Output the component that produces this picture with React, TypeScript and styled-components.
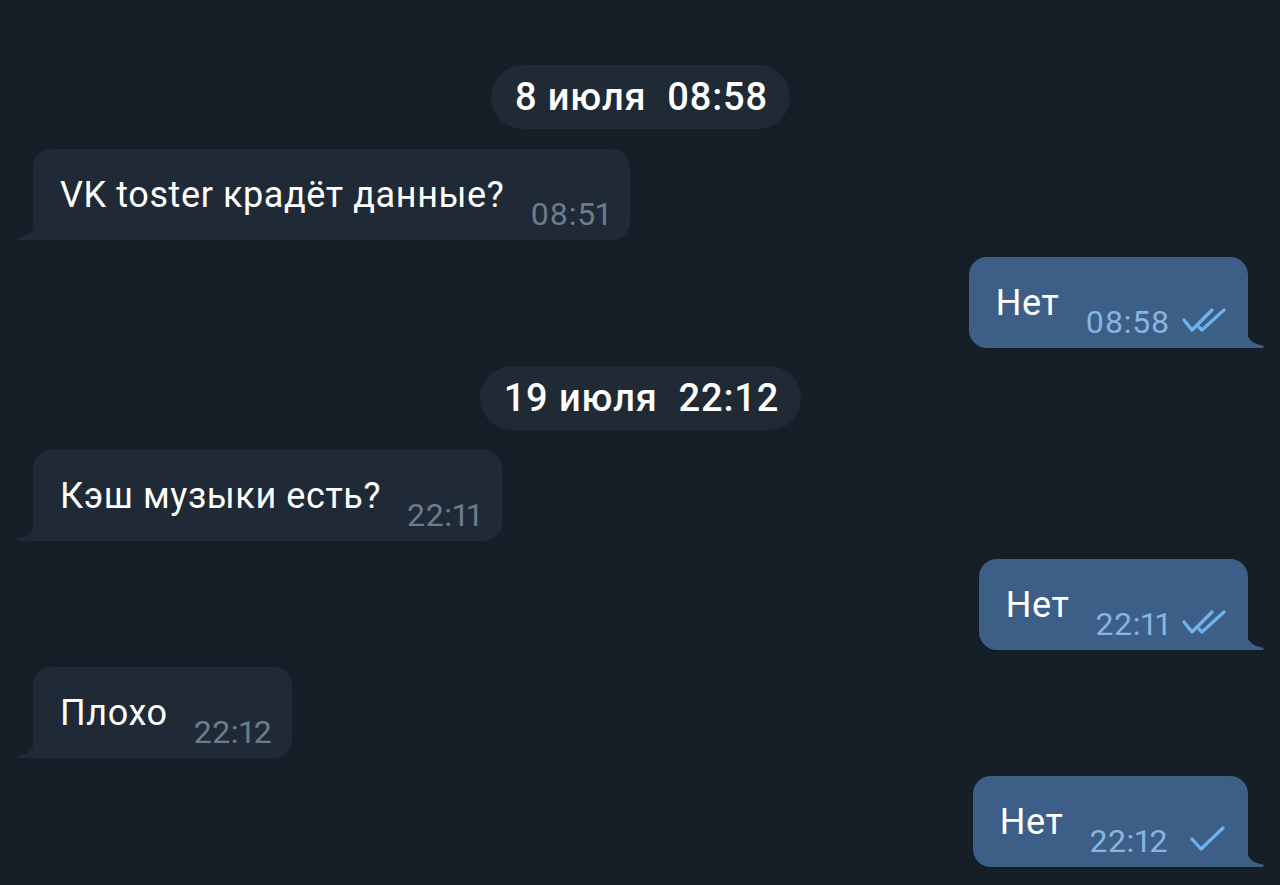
import React from "react";
import styled, { createGlobalStyle } from "styled-components";

const Global = createGlobalStyle`
  html, body { margin: 0; padding: 0; background: #161e27; }
  body { font-family: Roboto, "Noto Sans", sans-serif; -webkit-font-smoothing: antialiased; }
`;

const Chat = styled.div`
  width: 1280px;
  height: 885px;
  box-sizing: border-box;
  background: #161e27;
  padding: 65px 32px 0 33px;
  display: flex;
  flex-direction: column;
  overflow: hidden;
`;

const DatePill = styled.div<{ $mt?: number }>`
  align-self: center;
  margin-top: ${(p) => p.$mt ?? 0}px;
  height: 64px;
  box-sizing: border-box;
  padding: 0 22px 0 24px;
  border-radius: 32px;
  background: #1f2a35;
  color: #ffffff;
  font-size: 38px;
  font-weight: 500;
  display: flex;
  align-items: center;
  white-space: pre;
  letter-spacing: 0.9px;
`;

const Bubble = styled.div<{ $out?: boolean; $mt: number }>`
  position: relative;
  align-self: ${(p) => (p.$out ? "flex-end" : "flex-start")};
  margin-top: ${(p) => p.$mt}px;
  height: 91px;
  box-sizing: border-box;
  padding: ${(p) => (p.$out ? "0 22px 0 27px" : "0 20px 0 27px")};
  background: ${(p) => (p.$out ? "#3d5f87" : "#1f2a36")};
  border-radius: ${(p) => (p.$out ? "18px 18px 0 18px" : "18px 18px 18px 0")};
  display: flex;
  align-items: flex-end;
`;

const Tail = styled.svg<{ $out?: boolean }>`
  position: absolute;
  bottom: 0;
  width: 18px;
  height: 22px;
  ${(p) => (p.$out ? "right: -16px; transform: scaleX(-1);" : "left: -16px;")}
`;

const Text = styled.span`
  color: #ffffff;
  font-size: 36px;
  line-height: 36px;
  letter-spacing: 0.6px;
  margin-bottom: 27px;
  white-space: nowrap;
`;

const Meta = styled.span`
  display: flex;
  align-items: flex-end;
  margin-left: 26px;
  margin-bottom: 10px;
`;

const Time = styled.span<{ $out?: boolean }>`
  color: ${(p) => (p.$out ? "#86b5df" : "#6c7c8c")};
  font-size: 32px;
  line-height: 32px;
  letter-spacing: 0.6px;
  font-weight: 400;
  font-variant-numeric: proportional-nums;
  font-feature-settings: "pnum" 1;
`;

const Check = styled.svg<{ $w: number }>`
  width: ${(p) => p.$w}px;
  height: 26px;
  margin-left: ${(p) => (p.$w > 40 ? 12 : 22)}px;
  margin-bottom: 5px;
`;

const TailShape = ({ out, color }: { out?: boolean; color: string }) => (
  <Tail $out={out} viewBox="0 0 18 22">
    <path d="M18 0 C18 10 15 17 1.5 19.5 C0.2 19.8 0 20.6 0.4 21.3 C0.7 21.8 1.2 22 2 22 L18 22 Z" fill={color} />
  </Tail>
);

const DoubleCheck = () => (
  <Check $w={44} viewBox="0 0 44 26">
    <g fill="none" stroke="#6cb4ef" strokeWidth="3.2" strokeLinecap="round" strokeLinejoin="round">
      <path d="M2 13 L10 23 L30 3" />
      <path d="M17 20 L20 23 L42 3" />
    </g>
  </Check>
);

const SingleCheck = () => (
  <Check $w={36} viewBox="0 0 36 26">
    <g fill="none" stroke="#6cb4ef" strokeWidth="3.2" strokeLinecap="round" strokeLinejoin="round">
      <path d="M2 13 L11 23 L33 2" />
    </g>
  </Check>
);

type Msg = { text: string; time: string; out?: boolean; mt: number; checks?: 1 | 2 };

const Message = ({ m }: { m: Msg }) => (
  <Bubble $out={m.out} $mt={m.mt}>
    <TailShape out={m.out} color={m.out ? "#3d5f87" : "#1f2a36"} />
    <Text>{m.text}</Text>
    <Meta>
      <Time $out={m.out}>{m.time}</Time>
      {m.checks === 2 && <DoubleCheck />}
      {m.checks === 1 && <SingleCheck />}
    </Meta>
  </Bubble>
);

export default function App() {
  return (
    <>
      <Global />
      <Chat>
        <DatePill>{"8 июля  08:58"}</DatePill>
        <Message m={{ text: "VK toster крадёт данные?", time: "08:51", mt: 20 }} />
        <Message m={{ text: "Нет", time: "08:58", out: true, mt: 17, checks: 2 }} />
        <DatePill $mt={18}>{"19 июля  22:12"}</DatePill>
        <Message m={{ text: "Кэш музыки есть?", time: "22:11", mt: 20 }} />
        <Message m={{ text: "Нет", time: "22:11", out: true, mt: 18, checks: 2 }} />
        <Message m={{ text: "Плохо", time: "22:12", mt: 17 }} />
        <Message m={{ text: "Нет", time: "22:12", out: true, mt: 18, checks: 1 }} />
      </Chat>
    </>
  );
}
